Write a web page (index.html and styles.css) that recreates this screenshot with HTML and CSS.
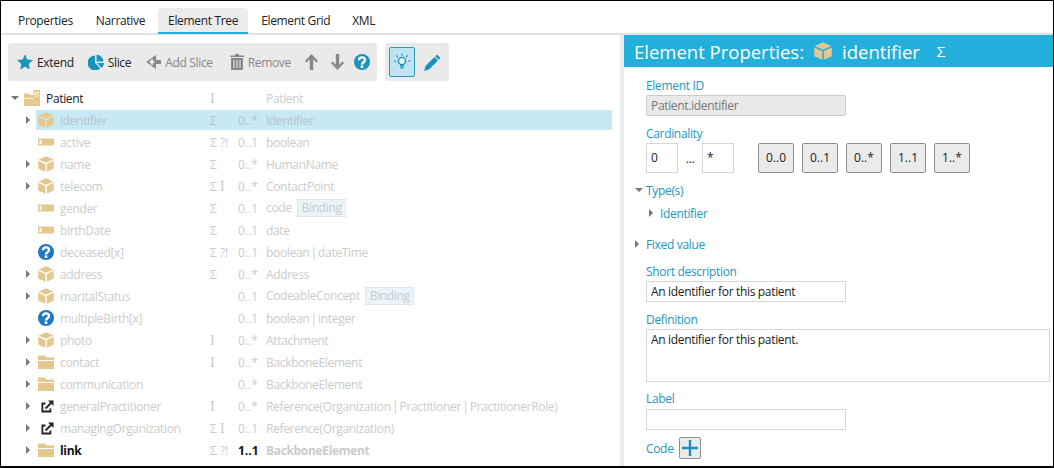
FILE: index.html
```html
<!DOCTYPE html>
<html>

<head>
  <meta charset="UTF-8">
  <title>Element Tree</title>
  <link rel="stylesheet" href="styles.css">
</head>

<body>
  <svg class="defs" xmlns="http://www.w3.org/2000/svg" width="0" height="0">
    <symbol id="i-cube" viewBox="0 0 16 16">
      <path fill="#e5c88f" d="M8 .3 15.400 3.600 8 6.800.6 3.600zM.2 4.800 7.300 8v7.800L.2 12.600zM15.800 4.800 8.700 8v7.800l7.100-3.200z" />
    </symbol>
    <symbol id="i-bar" viewBox="0 0 16 16">
      <path fill="#e5c88f" d="M0 4.500h16v7H0z" />
      <path fill="#fff" d="M1.500 6h2v4h-2z" />
    </symbol>
    <symbol id="i-folder" viewBox="0 0 16 16">
      <path fill="#e5c88f" d="M0 1.500h7l1.500 2H16v2.600H0zM0 7h16v8H0z" />
    </symbol>
    <symbol id="i-root" viewBox="0 0 16 16">
      <path fill="#e5c88f" d="M0 3.500h5l1 1.500h3.500V0H16v16H0z" />
      <path fill="#fff" d="M0 8.200h9.500v.8H0zM10.800 2h1v5h-1zM13.500 2h.8v5h-.8zM10.800 2h3.500v.8h-3.500z" />
    </symbol>
    <symbol id="i-help" viewBox="0 0 16 16">
      <circle cx="8" cy="8" r="8" fill="currentColor" />
      <path fill="none" stroke="#fff" stroke-width="2.400" d="M5 6.200C5 4.400 6.300 3.400 8 3.400s3 1 3 2.600c0 2.200-3 2.200-3 4.400" />
      <path fill="#fff" d="M6.700 11.400h2.600V14H6.700z" />
    </symbol>
    <symbol id="i-link" viewBox="0 0 16 16">
      <path fill="none" stroke="#222" stroke-width="1.800" d="M7.500 5.500H4.400v8h8V10.500" />
      <path fill="none" stroke="#222" stroke-width="1.800" d="M7.500 10.500 13 5" />
      <path fill="#222" d="M10 2.500h5.500V8z" />
    </symbol>
  </svg>

  <div class="window">
    <nav class="tabs">
      <span class="tab">Properties</span>
      <span class="tab narrative">Narrative</span>
      <span class="tab active">Element Tree</span>
      <span class="tab">Element Grid</span>
      <span class="tab">XML</span>
    </nav>

    <div class="panes">
      <section class="left">
        <div class="toolbars">
          <div class="toolbar main">
            <span class="tool">
              <svg width="16" height="16" viewBox="0 0 16 16"><path fill="#1b93bd" d="M8 .3 10.300 5.500l5.700.6-4.300 3.800 1.200 5.700L8 12.700l-4.900 2.900 1.200-5.700L0 6.100l5.700-.6z" /></svg>
              Extend
            </span>
            <span class="tool">
              <svg width="16" height="16" viewBox="0 0 16 16"><path fill="#1b93bd" d="M7 1.500V9l5.300 5.300A7.500 7.500 0 1 1 7 1.500zM8.500 .5a7.500 7.500 0 0 1 7 7h-7zM8.800 9H16a7.500 7.500 0 0 1-2.200 5z" /></svg>
              Slice
            </span>
            <span class="tool off add-slice">
              <svg width="15" height="16" viewBox="0 0 15 16"><path fill="#888" fill-rule="evenodd" d="M0 8 10 1v5h5v4h-5v5zM5 7H3.500v2H5v1.800h2V9h1.500V7H7V5.200H5z" /></svg>
              Add Slice
            </span>
            <span class="tool off remove">
              <svg width="14" height="16" viewBox="0 0 14 16"><path fill="#888" d="M5 0h4v1.500h5V3H0V1.500h5zM1 4h12v12H1zM3.500 6v8h1V6zM6.500 6v8h1V6zM9.500 6v8h1V6z" fill-rule="evenodd" /></svg>
              Remove
            </span>
            <svg class="arrow" width="13" height="16" viewBox="0 0 13 16"><path fill="#888" d="M6.500 0 13 7l-1.600 1.500-3.200-3.300V16H4.800V5.200L1.600 8.500 0 7z" /></svg>
            <svg class="arrow" width="13" height="16" viewBox="0 0 13 16"><path fill="#888" d="M6.500 16 13 9l-1.600-1.500-3.200 3.300V0H4.800v10.800L1.600 7.500 0 9z" /></svg>
            <svg class="help" width="16" height="16"><use href="#i-help" /></svg>
          </div>
          <div class="toolbar side">
            <span class="toggle">
              <svg width="18" height="18" viewBox="0 0 18 18"><circle cx="9" cy="8" r="3.600" fill="#e7f3f8" stroke="#1b93bd" stroke-width="1.400" /><path fill="#1b93bd" d="M7 12h4v1.500H7zM7.500 14h3v1.500h-3zM8.500 .5h1v2.400h-1zM3 2.800l.8-.7 1.500 1.700-.8.7zM15 2.800l-.8-.7-1.500 1.700.8.7zM.8 7.500h2.300v1H.8zM14.900 7.500h2.300v1h-2.300z" /></svg>
            </span>
            <svg width="17" height="17" viewBox="0 0 17 17"><path fill="#1b93bd" d="M13 .5 16.500 4l-1.800 1.800-3.500-3.500zM10.500 3l3.500 3.500-8.800 8.800L0 17l1.700-5.200z" /></svg>
          </div>
        </div>

        <div class="tree">
          <div class="row root">
            <span class="twist open"></span>
            <svg class="icon" width="16" height="16"><use href="#i-root" /></svg>
            <span class="name">Patient</span><span class="flags"><span class="serif">I</span></span><span class="card"></span><span class="type">Patient</span>
          </div>
          <div class="row selected">
            <span class="twist"></span><svg class="icon" width="16" height="16"><use href="#i-cube" /></svg>
            <span class="name">identifier</span><span class="flags">Σ</span><span class="card">0..*</span><span class="type">Identifier</span>
          </div>
          <div class="row">
            <span class="twist none"></span><svg class="icon" width="16" height="16"><use href="#i-bar" /></svg>
            <span class="name">active</span><span class="flags">Σ ?!</span><span class="card">0..1</span><span class="type">boolean</span>
          </div>
          <div class="row">
            <span class="twist"></span><svg class="icon" width="16" height="16"><use href="#i-cube" /></svg>
            <span class="name">name</span><span class="flags">Σ</span><span class="card">0..*</span><span class="type">HumanName</span>
          </div>
          <div class="row">
            <span class="twist"></span><svg class="icon" width="16" height="16"><use href="#i-cube" /></svg>
            <span class="name">telecom</span><span class="flags">Σ <span class="serif">I</span></span><span class="card">0..*</span><span class="type">ContactPoint</span>
          </div>
          <div class="row">
            <span class="twist none"></span><svg class="icon" width="16" height="16"><use href="#i-bar" /></svg>
            <span class="name">gender</span><span class="flags">Σ</span><span class="card">0..1</span><span class="type">code <span class="binding">Binding</span></span>
          </div>
          <div class="row">
            <span class="twist none"></span><svg class="icon" width="16" height="16"><use href="#i-bar" /></svg>
            <span class="name">birthDate</span><span class="flags">Σ</span><span class="card">0..1</span><span class="type">date</span>
          </div>
          <div class="row">
            <span class="twist none"></span><svg class="icon qmark" width="16" height="16"><use href="#i-help" /></svg>
            <span class="name">deceased[x]</span><span class="flags">Σ ?!</span><span class="card">0..1</span><span class="type">boolean | dateTime</span>
          </div>
          <div class="row">
            <span class="twist"></span><svg class="icon" width="16" height="16"><use href="#i-cube" /></svg>
            <span class="name">address</span><span class="flags">Σ</span><span class="card">0..*</span><span class="type">Address</span>
          </div>
          <div class="row">
            <span class="twist"></span><svg class="icon" width="16" height="16"><use href="#i-cube" /></svg>
            <span class="name">maritalStatus</span><span class="flags"></span><span class="card">0..1</span><span class="type">CodeableConcept <span class="binding">Binding</span></span>
          </div>
          <div class="row">
            <span class="twist none"></span><svg class="icon qmark" width="16" height="16"><use href="#i-help" /></svg>
            <span class="name">multipleBirth[x]</span><span class="flags"></span><span class="card">0..1</span><span class="type">boolean | integer</span>
          </div>
          <div class="row">
            <span class="twist"></span><svg class="icon" width="16" height="16"><use href="#i-cube" /></svg>
            <span class="name">photo</span><span class="flags"><span class="serif">I</span></span><span class="card">0..*</span><span class="type">Attachment</span>
          </div>
          <div class="row">
            <span class="twist"></span><svg class="icon" width="16" height="16"><use href="#i-folder" /></svg>
            <span class="name">contact</span><span class="flags"><span class="serif">I</span></span><span class="card">0..*</span><span class="type">BackboneElement</span>
          </div>
          <div class="row">
            <span class="twist"></span><svg class="icon" width="16" height="16"><use href="#i-folder" /></svg>
            <span class="name">communication</span><span class="flags"></span><span class="card">0..*</span><span class="type">BackboneElement</span>
          </div>
          <div class="row">
            <span class="twist"></span><svg class="icon" width="16" height="16"><use href="#i-link" /></svg>
            <span class="name">generalPractitioner</span><span class="flags"><span class="serif">I</span></span><span class="card">0..*</span><span class="type">Reference(Organization | Practitioner | PractitionerRole)</span>
          </div>
          <div class="row">
            <span class="twist"></span><svg class="icon" width="16" height="16"><use href="#i-link" /></svg>
            <span class="name">managingOrganization</span><span class="flags">Σ <span class="serif">I</span></span><span class="card">0..1</span><span class="type">Reference(Organization)</span>
          </div>
          <div class="row changed">
            <span class="twist"></span><svg class="icon" width="16" height="16"><use href="#i-folder" /></svg>
            <span class="name">link</span><span class="flags">Σ ?!</span><span class="card">1..1</span><span class="type">BackboneElement</span>
          </div>
        </div>
      </section>

      <section class="right">
        <header class="props-title">
          <span>Element Properties:</span>
          <svg width="18" height="18"><use href="#i-cube" /></svg>
          <span>identifier</span>
          <span class="sigma">Σ</span>
        </header>

        <div class="props">
          <label class="lbl">Element ID</label>
          <div class="field disabled">Patient.identifier</div>

          <label class="lbl card-lbl">Cardinality</label>
          <div class="card-row">
            <div class="field small">0</div>
            <span class="dots">...</span>
            <div class="field small">*</div>
            <div class="card-btns">
              <span class="btn">0..0</span>
              <span class="btn">0..1</span>
              <span class="btn">0..*</span>
              <span class="btn">1..1</span>
              <span class="btn">1..*</span>
            </div>
          </div>

          <div class="lbl section types"><span class="twist open"></span>Type(s)</div>
          <div class="lbl section type-item"><span class="twist"></span>Identifier</div>
          <div class="lbl section fixed"><span class="twist"></span>Fixed value</div>

          <label class="lbl short">Short description</label>
          <div class="field">An identifier for this patient</div>

          <label class="lbl def">Definition</label>
          <div class="field area">An identifier for this patient.</div>

          <label class="lbl label-lbl">Label</label>
          <div class="field label-field"></div>

          <div class="code-row">
            <span class="lbl">Code</span>
            <span class="add">
              <svg width="16" height="16" viewBox="0 0 16 16"><path fill="#1b93bd" d="M6.800 0h2.400v6.800H16v2.400H9.200V16H6.800V9.200H0V6.800h6.800z" /></svg>
            </span>
          </div>
        </div>
      </section>
    </div>
  </div>
</body>

</html>
```

FILE: styles.css
```css
:root {
  --color-text: #222;
  --color-faded: #cbcbcb;
  --color-accent: #22afdc;
  --color-label: #2596c0;
  --color-bar: #eaeaea;
}

* {
  box-sizing: border-box;
  margin: 0;
  padding: 0;
}

html,
body {
  height: 100%;
  overflow: hidden;
}

body {
  background-color: #fff;
  color: var(--color-text);
  font-family: "Open Sans", "Noto Sans", sans-serif;
  font-size: 12px;
  letter-spacing: -0.33px;
}

.defs {
  display: block;
  height: 0;
}

.window {
  height: 468px;
  border: 1px solid #000;
  border-bottom-width: 2px;
  display: flex;
  flex-direction: column;
}

/* tabs */
.tabs {
  flex-shrink: 0;
  height: 34px;
  padding: 7px 0 0 6px;
  border-bottom: 2px solid #e2e2e2;
  display: flex;
}

.tab {
  height: 26px;
  padding: 0 11px;
  line-height: 26px;
  border-radius: 4px 4px 0 0;
}

.tab.narrative {
  margin-left: 1px;
}

.tab.active {
  margin: 0 2px;
  padding: 0 10px;
  background-color: #ececec;
  border-bottom: 2px solid var(--color-accent);
}

/* panes */
.panes {
  flex: 1;
  min-height: 0;
  display: flex;
}

.left {
  width: 619px;
  flex-shrink: 0;
  padding: 8px 0 0 7px;
}

.right {
  flex: 1;
  min-width: 0;
  border-left: 4px solid #ebebeb;
}

/* toolbars */
.toolbars {
  display: flex;
  gap: 8px;
}

.toolbar {
  height: 38px;
  background-color: var(--color-bar);
  border-radius: 3px;
  display: flex;
  align-items: center;
}

.toolbar.main {
  width: 369px;
  padding-left: 9px;
  gap: 14px;
}

.toolbar.side {
  width: 64px;
  padding-left: 4px;
  gap: 9px;
}

.tool {
  display: flex;
  align-items: center;
  gap: 4px;
}

.tool.off {
  color: #888;
}

.add-slice {
  margin-left: 1px;
}

.remove {
  margin-left: 3px;
}

.arrow {
  margin-right: -1px;
}

.help {
  color: #1b93bd;
  margin-left: -3px;
}

.toggle {
  width: 26px;
  height: 30px;
  background-color: #bfe3f0;
  border: 1px solid #2a9cc4;
  border-radius: 2px;
  display: flex;
  align-items: center;
  justify-content: center;
}

/* tree */
.tree {
  margin-top: 6px;
}

.row {
  height: 22px;
  padding-left: 2px;
  display: flex;
  align-items: center;
  color: var(--color-faded);
  white-space: nowrap;
}

.twist {
  flex-shrink: 0;
  width: 0;
  height: 0;
  border-style: solid;
  border-width: 4px 0 4px 4px;
  border-color: transparent transparent transparent #777;
}

.twist.open {
  border-width: 4px 4px 0 4px;
  border-color: #777 transparent transparent transparent;
}

.twist.none {
  border-color: transparent;
}

.row .twist {
  margin-left: 16px;
  margin-right: 8px;
}

.row.root .twist {
  margin-left: 1px;
  margin-right: 5px;
}

.row.root .name {
  color: var(--color-text);
  width: 164px;
}

.icon {
  flex-shrink: 0;
  color: #1e78c2;
}

.name {
  width: 150px;
  margin-left: 6px;
  flex-shrink: 0;
}

.flags {
  width: 28px;
  flex-shrink: 0;
  letter-spacing: 0;
}

.serif {
  font-family: "Liberation Serif", serif;
  font-size: 14px;
}

.card {
  width: 28px;
  flex-shrink: 0;
  letter-spacing: 0;
}

.type {
  word-spacing: -1.5px;
}

.row.selected {
  background: linear-gradient(to right, transparent 28px, #c7e9f4 28px) no-repeat;
  width: 604px;
  height: 20px;
  margin: 1px 0;
}

.row.selected .flags,
.row.selected .card,
.row.selected .type,
.row.selected .name {
  color: #b9c3c8;
}

.binding {
  display: inline-block;
  height: 18px;
  line-height: 16px;
  margin-left: 4px;
  padding: 0 3.500px;
  background-color: #e9f5fb;
  border: 1px solid #dbe8ee;
}

.row.changed .name,
.row.changed .card {
  color: #111;
  font-weight: 700;
}

.row.changed .type {
  font-weight: 700;
}

/* element properties */
.props-title {
  height: 32px;
  background-color: var(--color-accent);
  color: #fff;
  font-size: 18.500px;
  letter-spacing: 0;
  padding-left: 10px;
  display: flex;
  align-items: center;
  gap: 10px;
}

.sigma {
  font-size: 15px;
  margin-left: 7px;
}

.props {
  padding: 10px 0 0 22px;
}

.lbl {
  display: block;
  color: var(--color-label);
  height: 16px;
  padding-top: 1px;
  line-height: 16px;
}

.field {
  width: 200px;
  height: 21px;
  margin-top: 2px;
  padding: 0 4px;
  border: 1px solid #d6d6d6;
  line-height: 19px;
}

.field.disabled {
  background-color: #e9e9e9;
  border-color: #ccc;
  border-radius: 2px;
  color: #777;
}

.card-lbl {
  margin-top: 9px;
}

.card-row {
  margin-top: 2px;
  display: flex;
  align-items: center;
}

.field.small {
  width: 32px;
  height: 30px;
  margin-top: 0;
  line-height: 28px;
}

.dots {
  width: 24px;
  text-align: center;
}

.card-btns {
  margin-left: 24px;
  display: flex;
  gap: 8px;
}

.btn {
  width: 36px;
  height: 30px;
  background-color: #ebebeb;
  border: 1px solid #8f8f8f;
  border-radius: 2px;
  line-height: 28px;
  text-align: center;
  letter-spacing: 0;
}

.section {
  position: relative;
}

.section .twist {
  position: absolute;
  top: 4px;
  left: -11px;
}

.section .twist.open {
  top: 6px;
}

.types {
  margin-top: 9px;
}

.type-item {
  margin: 7px 0 0 14px;
}

.fixed {
  margin-top: 15px;
}

.short {
  margin-top: 11px;
}

.def {
  margin-top: 9px;
}

.field.area {
  width: 404px;
  height: 53px;
}

.label-lbl {
  margin-top: 8px;
}

.label-field {
  margin-top: 3px;
}

.code-row {
  margin-top: 7px;
  display: flex;
  align-items: center;
  gap: 5px;
}

.add {
  width: 22px;
  height: 22px;
  background-color: #ebebeb;
  border: 1px solid #8f8f8f;
  border-radius: 2px;
  display: flex;
  align-items: center;
  justify-content: center;
}
```
